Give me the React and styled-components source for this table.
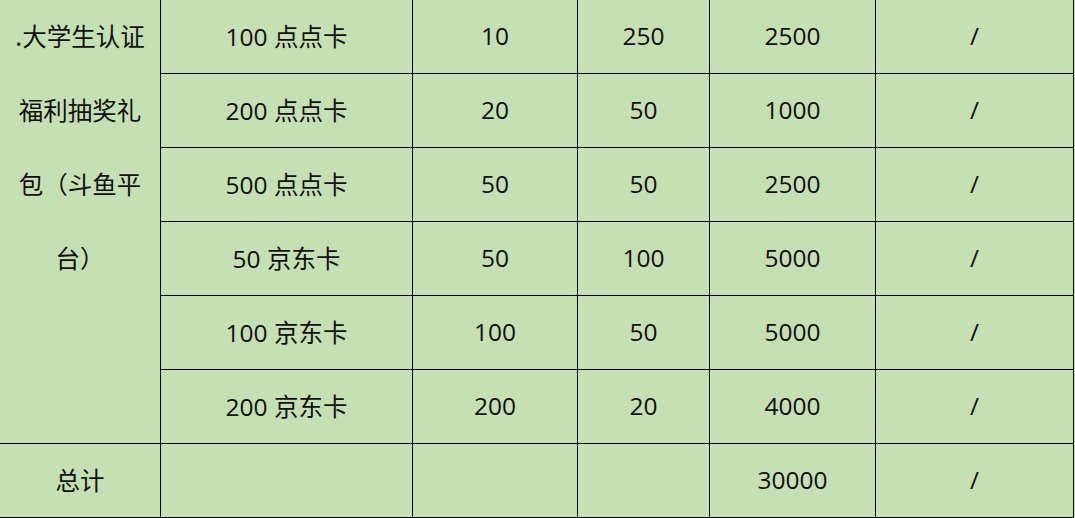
import React from "react";
import styled, { createGlobalStyle } from "styled-components";

const Global = createGlobalStyle`
  html, body { margin: 0; padding: 0; background: #c5e0b3; }
  body { width: 1075px; height: 518px; overflow: hidden; }
`;

const Table = styled.div`
  display: grid;
  grid-template-columns: 161px 252px 165px 132px 166px 198px;
  grid-template-rows: repeat(7, 74px);
  background: #c5e0b3;
  font-family: "Open Sans", "Noto Sans CJK SC", sans-serif;
  font-size: 24.5px;
  color: #111;
`;

const Cell = styled.div`
  box-sizing: border-box;
  border-right: 1px solid #000;
  border-bottom: 1px solid #000;
  padding-bottom: 2px;
  display: flex;
  align-items: center;
  justify-content: center;
  white-space: nowrap;
  grid-row: ${(p) => p.$row || "auto"};
  grid-column: ${(p) => p.$col || "auto"};
`;

const GroupCell = styled(Cell)`
  display: block;
  white-space: normal;
  text-align: center;
  line-height: 74px;
  padding: 0 14px;
  margin-top: -1px;
  font-family: "Noto Sans CJK SC", sans-serif;
`;

const rows = [
  ["100 点点卡", "10", "250", "2500", "/"],
  ["200 点点卡", "20", "50", "1000", "/"],
  ["500 点点卡", "50", "50", "2500", "/"],
  ["50 京东卡", "50", "100", "5000", "/"],
  ["100 京东卡", "100", "50", "5000", "/"],
  ["200 京东卡", "200", "20", "4000", "/"],
];

export default function App() {
  return (
    <>
      <Global />
      <Table>
        <GroupCell $row="1 / span 6" $col="1">
          .大学生认证福利抽奖礼包（斗鱼平台）
        </GroupCell>
        {rows.map((r, i) =>
          r.map((v, j) => (
            <Cell key={`${i}-${j}`} $row={i + 1} $col={j + 2}>
              {v}
            </Cell>
          ))
        )}
        <Cell $row={7} $col={1}>总计</Cell>
        <Cell $row={7} $col={2}></Cell>
        <Cell $row={7} $col={3}></Cell>
        <Cell $row={7} $col={4}></Cell>
        <Cell $row={7} $col={5}>30000</Cell>
        <Cell $row={7} $col={6}>/</Cell>
      </Table>
    </>
  );
}
